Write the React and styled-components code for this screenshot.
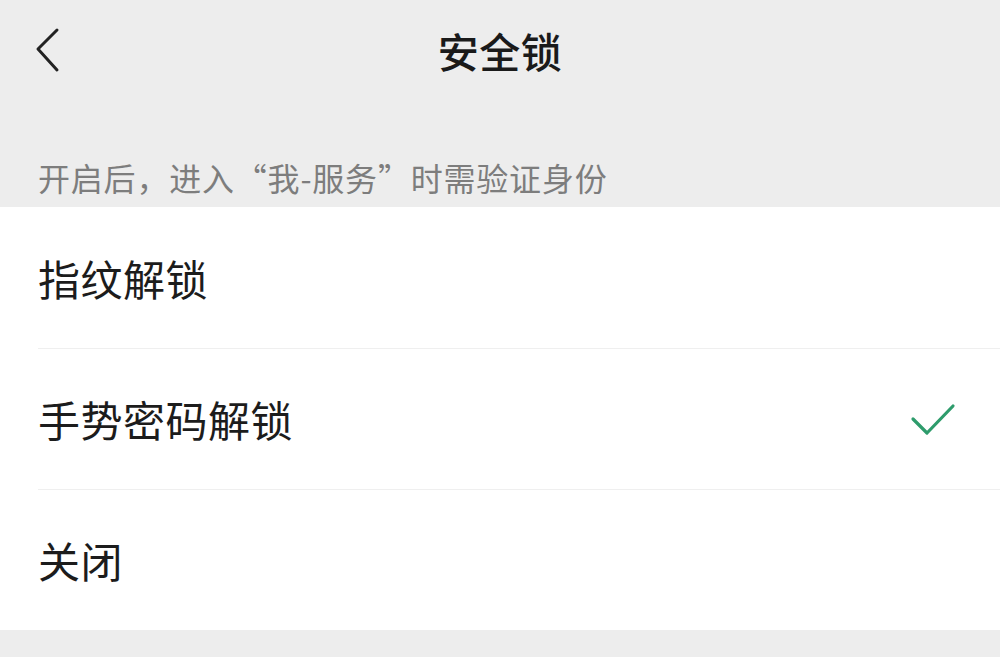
import React from "react";
import styled, { createGlobalStyle } from "styled-components";

const Global = createGlobalStyle`
  html, body { margin: 0; padding: 0; background: #ededed; }
  body { font-family: "Noto Sans CJK SC", "Noto Sans", sans-serif; }
`;

const Page = styled.div`
  width: 1000px;
  height: 657px;
  background: #ededed;
  display: flex;
  flex-direction: column;
  overflow: hidden;
`;

const NavBar = styled.header`
  position: relative;
  height: 100px;
  display: flex;
  align-items: center;
  justify-content: center;
`;

const BackButton = styled.button`
  position: absolute;
  left: 28px;
  top: 22px;
  width: 40px;
  height: 56px;
  padding: 0;
  border: none;
  background: transparent;
  display: flex;
  align-items: center;
  justify-content: center;
`;

const Title = styled.h1`
  margin: 0;
  font-size: 41px;
  font-weight: 500;
  color: #1a1a1a;
  line-height: 1;
  letter-spacing: 0.5px;
`;

const Hint = styled.p`
  margin: 0;
  height: 107px;
  box-sizing: border-box;
  padding: 0 0 10px 38px;
  display: flex;
  align-items: flex-end;
  font-size: 32px;
  line-height: 40px;
  letter-spacing: 0.8px;
  color: #7d7d7d;
`;

const Panel = styled.ul`
  list-style: none;
  margin: 0;
  padding: 0;
  background: #ffffff;
`;

const Row = styled.li`
  box-sizing: border-box;
  height: 141px;
  margin-left: 38px;
  padding-right: 40px;
  display: flex;
  align-items: center;
  justify-content: space-between;
  border-top: ${(p) => (p.$first ? "none" : "1px solid #efefef")};
`;

const Label = styled.span`
  font-size: 42px;
  color: #1c1c1c;
  line-height: 1;
  letter-spacing: 0.5px;
`;

const Check = styled.svg`
  width: 50px;
  height: 36px;
  margin-right: 2px;
`;

const Chevron = () => (
  <svg width="30" height="46" viewBox="0 0 30 46">
    <polyline
      points="24,3 5,22 24,43"
      fill="none"
      stroke="#222"
      strokeWidth="3"
      strokeLinecap="round"
      strokeLinejoin="round"
    />
  </svg>
);

const options = [
  { label: "指纹解锁", checked: false },
  { label: "手势密码解锁", checked: true },
  { label: "关闭", checked: false },
];

export default function App() {
  return (
    <>
      <Global />
      <Page>
        <NavBar>
          <BackButton aria-label="返回">
            <Chevron />
          </BackButton>
          <Title>安全锁</Title>
        </NavBar>
        <Hint>开启后，进入“我-服务”时需验证身份</Hint>
        <Panel>
          {options.map((o, i) => (
            <Row key={o.label} $first={i === 0}>
              <Label>{o.label}</Label>
              {o.checked && (
                <Check viewBox="0 0 50 36">
                  <polyline
                    points="5,18 19,32 45,5"
                    fill="none"
                    stroke="#2e9c6c"
                    strokeWidth="3.2"
                    strokeLinecap="round"
                    strokeLinejoin="round"
                  />
                </Check>
              )}
            </Row>
          ))}
        </Panel>
      </Page>
    </>
  );
}
